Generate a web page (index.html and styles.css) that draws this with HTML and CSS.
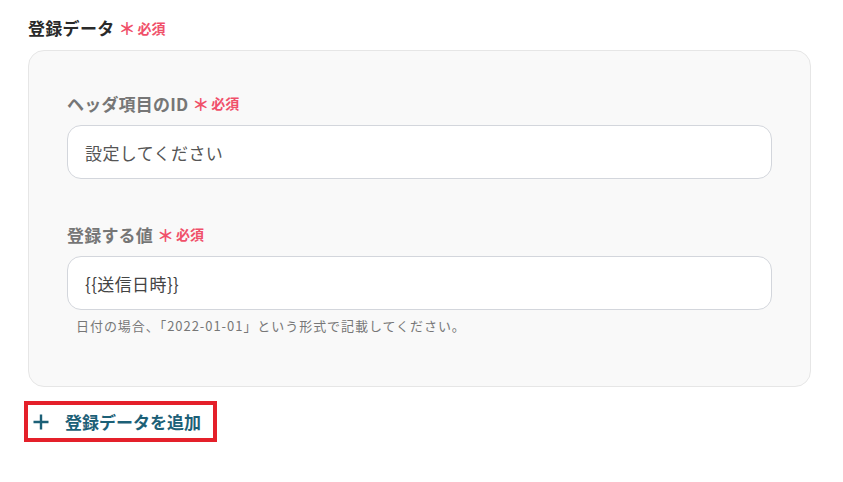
FILE: index.html
```html
<!DOCTYPE html>
<html lang="ja">
<head>
<meta charset="utf-8">
<link rel="stylesheet" href="styles.css">
</head>
<body>
<div class="page">
  <div class="section-label">登録データ<span class="req"><span class="ast">＊</span>必須</span></div>
  <div class="card">
    <div class="field">
      <div class="field-label">ヘッダ項目のID<span class="req"><span class="ast">＊</span>必須</span></div>
      <div class="input"><span class="placeholder">設定してください</span></div>
    </div>
    <div class="field">
      <div class="field-label">登録する値<span class="req"><span class="ast">＊</span>必須</span></div>
      <div class="input"><span class="value">{{送信日時}}</span></div>
      <div class="help">日付の場合、「2022-01-01」という形式で記載してください。</div>
    </div>
  </div>
  <div class="add-wrap">
    <button class="add-btn"><svg class="plus" width="16" height="16" viewBox="0 0 16 16"><path d="M8 0.5v15M0.5 8h15" stroke="#1c6077" stroke-width="2.4" fill="none"/></svg><span>登録データを追加</span></button>
  </div>
</div>
</body>
</html>
```

FILE: styles.css
```css
* { box-sizing: border-box; }
body {
  margin: 0;
  background: #fff;
  font-family: "Noto Sans CJK JP", "Noto Sans", sans-serif;
  color: #333;
}
.page {
  padding: 14px 32px 0 28px;
}
.section-label {
  font-size: 17px;
  letter-spacing: 0.3px;
  font-weight: 700;
  color: #2a2a2a;
  height: 28px;
  line-height: 28px;
  display: flex;
  align-items: center;
}
.req {
  color: #f0506a;
  font-size: 14px;
  font-weight: 700;
  margin-left: 4px;
  letter-spacing: 0;
  display: inline-flex;
  align-items: center;
}
.ast {
  font-size: 17px;
  margin-right: 2px;
}
.card {
  margin-top: 8px;
  background: #f9f9f9;
  border: 1px solid #e6e6e6;
  border-radius: 16px;
  padding: 39px 38px 51px 38px;
  display: flex;
  flex-direction: column;
  gap: 42px;
}
.field-label {
  font-size: 17px;
  letter-spacing: 0.2px;
  font-weight: 700;
  color: #767676;
  height: 26px;
  display: flex;
  align-items: center;
  margin-bottom: 9px;
}
.input {
  height: 54px;
  background: #fff;
  border: 1px solid #d3d6dc;
  border-radius: 14px;
  display: flex;
  align-items: center;
  padding: 0 17px;
  font-size: 17px;
  letter-spacing: 0.4px;
  color: #444;
}
.placeholder { color: #555; }
.value { color: #444; }
.help {
  margin-top: 7px;
  padding-left: 9px;
  font-size: 13px;
  letter-spacing: 0.95px;
  color: #777;
  line-height: 18px;
}
.add-wrap {
  margin-top: 14px;
  margin-left: -4px;
}
.add-btn {
  display: inline-flex;
  align-items: center;
  height: 41px;
  width: 193px;
  border: 4px solid #e4202a;
  background: #fff;
  padding: 0 0 0 5px;
  font-family: inherit;
  font-size: 17px;
  font-weight: 700;
  color: #1c6077;
  gap: 16px;
}
.plus { flex: none; }
```
